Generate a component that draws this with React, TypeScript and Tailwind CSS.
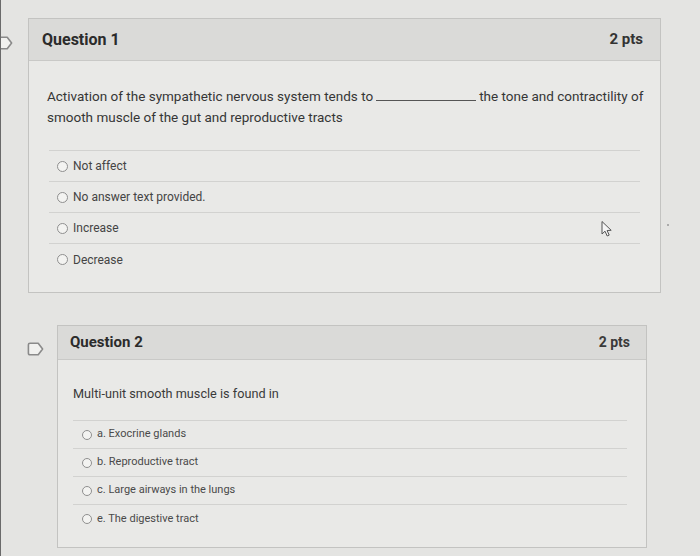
import React from "react";

const Bookmark = ({ className }: { className?: string }) => (
  <svg className={className} width="17" height="14" viewBox="0 0 17 14" fill="none">
    <path d="M3 1.2 H11.2 L15.6 7 L11.2 12.8 H3 Q1.4 12.8 1.4 11.2 V2.8 Q1.4 1.2 3 1.2 Z" fill="#f1f1ef" stroke="#8a8a8a" strokeWidth="1.6" strokeLinejoin="round" />
  </svg>
);

const Radio = ({ size = 11 }: { size?: number }) => (
  <span
    className="inline-block rounded-full border border-[#8f8f8f] bg-[#f3f3f1] shrink-0"
    style={{ width: size, height: size }}
  />
);

const q1Options = ["Not affect", "No answer text provided.", "Increase", "Decrease"];
const q2Options = ["a. Exocrine glands", "b. Reproductive tract", "c. Large airways in the lungs", "e. The digestive tract"];

export default function App() {
  return (
    <div className="relative w-[700px] h-[556px] overflow-hidden bg-[#e4e4e2] border-l border-[#6a6a6a] font-['Roboto',_'Liberation_Sans',_sans-serif]">
      <div className="pt-[18px]">
        {/* Question 1 */}
        <div className="relative ml-[27px] w-[633px] border border-[#c3c3c1] bg-[#e9e9e7]">
          <Bookmark className="absolute left-[-33px] top-[17px]" />
          <div className="h-[42px] flex items-center justify-between pl-[13px] pr-[17px] bg-[#dadad8] border-b border-[#c9c9c7]">
            <span className="text-[16px] font-bold text-[#2b2b2b]">Question 1</span>
            <span className="text-[15px] font-bold text-[#333]">2 pts</span>
          </div>
          <div className="pt-[25px] pl-[18px] text-[13.5px] leading-[21px] text-[#363636] whitespace-nowrap">
            Activation of the sympathetic nervous system tends to
            <span className="inline-block w-[100px] border-b border-[#555] mx-[3px] align-baseline h-[14px]" />
            the tone and contractility of
            <br />
            smooth muscle of the gut and reproductive tracts
          </div>
          <div className="mx-[20px] mt-[22px] border-t border-[#d2d2d0] pb-[17px]">
            {q1Options.map((o, i) => (
              <div
                key={o}
                className={`h-[31px] flex items-center gap-[5px] pl-[8px] text-[12px] text-[#444] ${i < q1Options.length - 1 ? "border-b border-[#d2d2d0]" : ""}`}
              >
                <Radio size={11} />
                <span>{o}</span>
              </div>
            ))}
          </div>
        </div>

        {/* Question 2 */}
        <div className="relative mt-[32px] ml-[56px] w-[590px] border border-[#c3c3c1] bg-[#e9e9e7]">
          <Bookmark className="absolute left-[-31px] top-[16px]" />
          <div className="h-[34px] flex items-center justify-between pl-[12px] pr-[16px] bg-[#dadad8] border-b border-[#c9c9c7]">
            <span className="text-[15px] font-bold text-[#2b2b2b]">Question 2</span>
            <span className="text-[14px] font-bold text-[#3a3a3a]">2 pts</span>
          </div>
          <div className="pt-[24px] pl-[15px] text-[12.7px] leading-[20px] text-[#3a3a3a]">
            Multi-unit smooth muscle is found in
          </div>
          <div className="ml-[15px] mr-[19px] mt-[16px] border-t border-[#d2d2d0] pb-[14px]">
            {q2Options.map((o, i) => (
              <div
                key={o}
                className={`h-[28px] flex items-center gap-[5px] pl-[9px] text-[11px] text-[#4a4a4a] ${i < q2Options.length - 1 ? "border-b border-[#d2d2d0]" : ""}`}
              >
                <Radio size={10} />
                <span>{o}</span>
              </div>
            ))}
          </div>
        </div>
      </div>

      {/* mouse cursor */}
      <svg className="absolute left-[599px] top-[220px]" width="14" height="18" viewBox="0 0 14 18" fill="none">
        <path d="M2 1.5 L2 14 L5 11.2 L7.2 16 L9.2 15.1 L7.1 10.5 L11.2 10.3 Z" fill="#f5f5f5" stroke="#555" strokeWidth="1" strokeLinejoin="round" />
      </svg>
      <span className="absolute left-[666px] top-[224px] w-[2px] h-[2px] rounded-full bg-[#999]" />
    </div>
  );
}
